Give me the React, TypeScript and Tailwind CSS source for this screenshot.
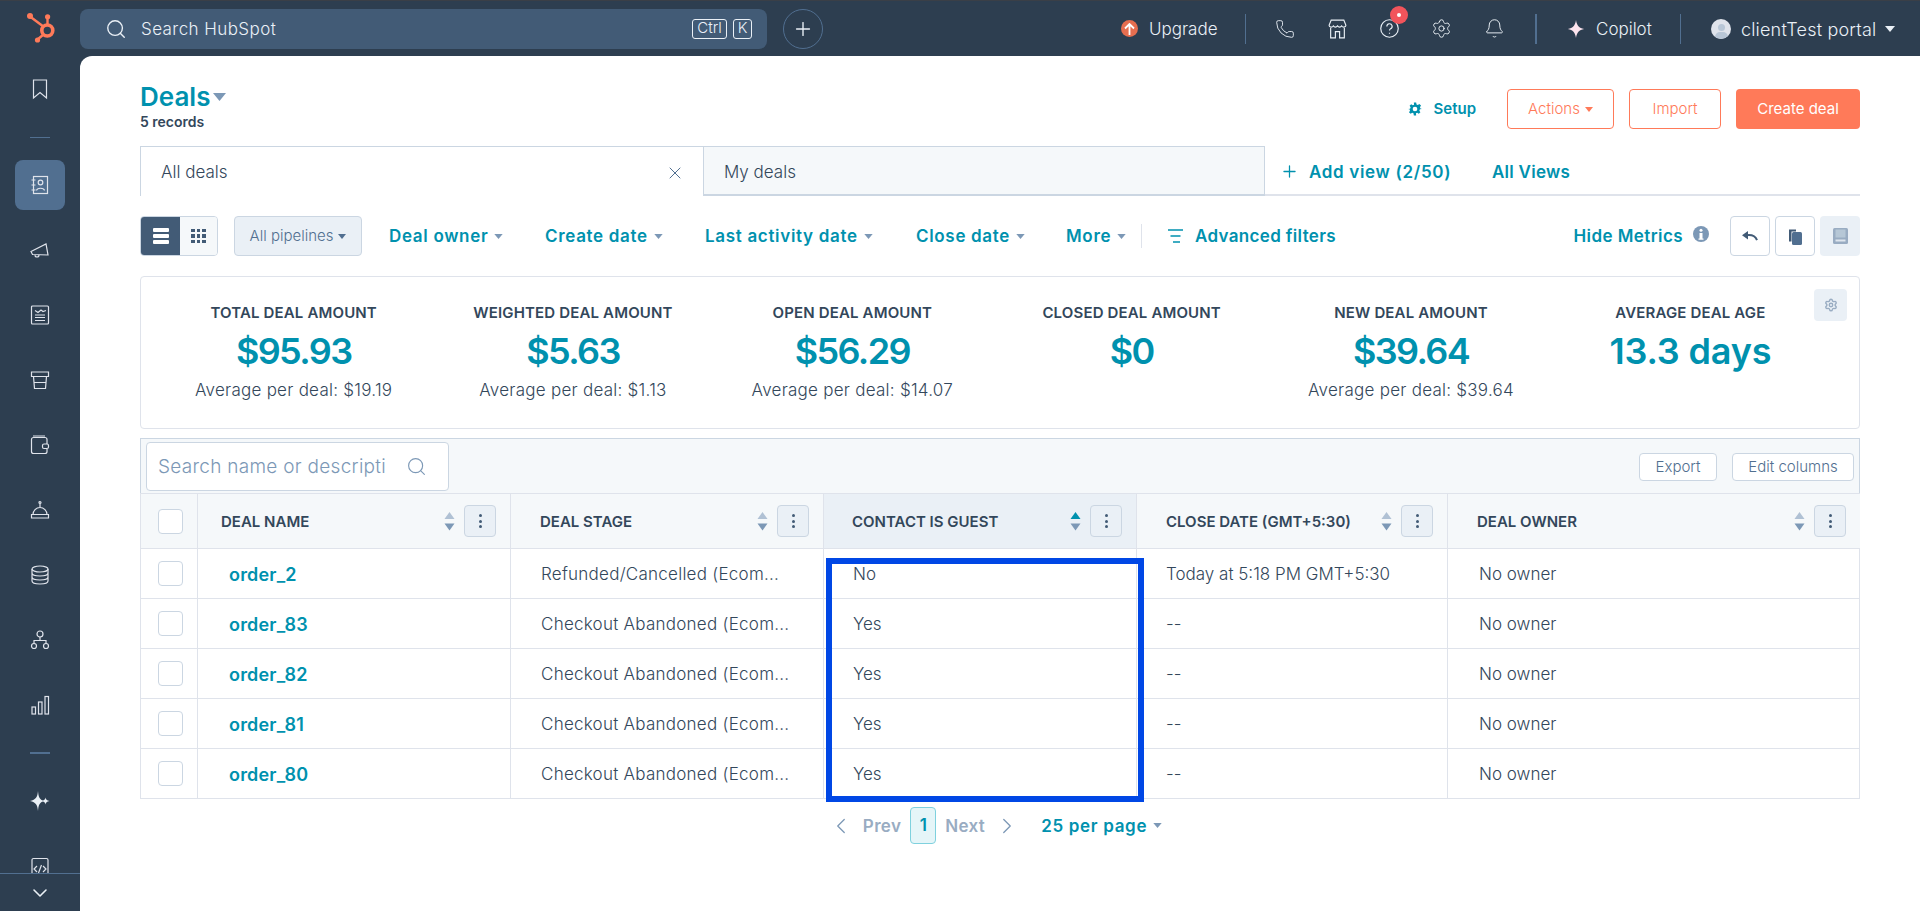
import { ReactNode } from "react";
import { Search, Plus, X, ChevronDown, ChevronLeft, ChevronRight, Phone, Settings, Bell } from "lucide-react";

const filters = [
  { label: "Deal owner", width: "w-[156px]" },
  { label: "Create date", width: "w-[160px]" },
  { label: "Last activity date", width: "w-[211px]" },
  { label: "Close date", width: "w-[150px]" },
  { label: "More", width: "w-[75px]" },
];

const stats = [
  { label: "TOTAL DEAL AMOUNT", value: "$95.93", sub: "Average per deal: $19.19", fit: "tracking-[-0.045em]" },
  { label: "WEIGHTED DEAL AMOUNT", value: "$5.63", sub: "Average per deal: $1.13", fit: "tracking-[-0.045em]" },
  { label: "OPEN DEAL AMOUNT", value: "$56.29", sub: "Average per deal: $14.07", fit: "tracking-[-0.045em]" },
  { label: "CLOSED DEAL AMOUNT", value: "$0", sub: "", fit: "tracking-[-0.045em]" },
  { label: "NEW DEAL AMOUNT", value: "$39.64", sub: "Average per deal: $39.64", fit: "tracking-[-0.045em]" },
  { label: "AVERAGE DEAL AGE", value: "13.3 days", sub: "", fit: "tracking-[-0.005em]" },
];

const rows = [
  { name: "order_2", stage: "Refunded/Cancelled (Ecom...", guest: "No", close: "Today at 5:18 PM GMT+5:30" },
  { name: "order_83", stage: "Checkout Abandoned (Ecom...", guest: "Yes", close: "--" },
  { name: "order_82", stage: "Checkout Abandoned (Ecom...", guest: "Yes", close: "--" },
  { name: "order_81", stage: "Checkout Abandoned (Ecom...", guest: "Yes", close: "--" },
  { name: "order_80", stage: "Checkout Abandoned (Ecom...", guest: "Yes", close: "--" },
];

const gridCols = "grid grid-cols-[57px_313px_313px_313px_311px_413px]";
const linkText = "text-[17px] tracking-[0.04em] font-semibold text-[#0091ae] whitespace-nowrap";

function Caret({ className = "text-[#7c98b6]" }: { className?: string }) {
  return (
    <svg width="10" height="6" viewBox="0 0 10 6" className={`shrink-0 ${className}`}>
      <path d="M0 0h10L5 6z" fill="currentColor" />
    </svg>
  );
}

function SideIcon({ children }: { children: ReactNode }) {
  return (
    <svg width="22" height="22" viewBox="0 0 22 22" fill="none" stroke="currentColor" strokeWidth="1.2" className="text-[#dfe3eb]">
      {children}
    </svg>
  );
}

function SideSlot({ children, active }: { children: ReactNode; active?: boolean }) {
  return (
    <div className="h-[65px] shrink-0 flex items-center justify-center">
      <div className={`w-[50px] h-[50px] rounded-lg flex items-center justify-center ${active ? "bg-[#516f90]" : ""}`}>{children}</div>
    </div>
  );
}

function Sparkle({ color, size }: { color: string; size: number }) {
  return (
    <svg width={size} height={size} viewBox="0 0 20 20" className={color}>
      <path d="M10 0c.8 6 3.500 9 9 10-5.500 1-8.200 4-9 10-.8-6-3.500-9-9-10 5.500-1 8.200-4 9-10z" fill="currentColor" />
    </svg>
  );
}

function SortArrows({ active }: { active?: boolean }) {
  return (
    <svg width="11" height="19" viewBox="0 0 11 19" className="shrink-0">
      <path d="M5.500 0l5 7H.5z" fill={active ? "#0091ae" : "#b0c1d4"} />
      <path d="M5.500 18.500l-5-7h10z" fill="#7c98b6" />
    </svg>
  );
}

function MenuButton() {
  return (
    <button className="ml-[9px] w-[32px] h-[32px] rounded border border-[#cbd6e2] bg-[#eaf0f6] flex flex-col items-center justify-center gap-[2.500px]">
      <span className="w-[3px] h-[3px] rounded-full bg-[#425b76]" />
      <span className="w-[3px] h-[3px] rounded-full bg-[#425b76]" />
      <span className="w-[3px] h-[3px] rounded-full bg-[#425b76]" />
    </button>
  );
}

function HeaderCell({ label, active }: { label: string; active?: boolean }) {
  return (
    <div className={`flex items-center border-l border-[#dfe3eb] pr-[14px] ${active ? "bg-[#eaf0f6] pl-[28px]" : "pl-[29px]"}`}>
      <span className="pt-[2px] text-[15px] font-semibold text-[#33475b] whitespace-nowrap mr-auto">{label}</span>
      <SortArrows active={active} />
      <MenuButton />
    </div>
  );
}

export default function App() {
  return (
    <div className="w-[1920px] h-[911px] overflow-hidden bg-[#2d3e50] font-['Inter',sans-serif] font-light text-[#33475b] flex flex-col">
      <header className="h-[56px] shrink-0 flex items-center text-[#eaf0f6] border-t border-[#3a3f47]">
        <div className="w-[80px] shrink-0 pl-[26px]">
          <svg width="30" height="32" viewBox="0 0 30 32" fill="none" stroke="#ff7a59" className="mt-[-1px]">
            <circle cx="21.300" cy="18.500" r="5.500" strokeWidth="3.600" />
            <path d="M21.500 5v8M4 4.500l14 10.500M11.500 27.500l6-5" strokeWidth="2.400" />
            <circle cx="21.600" cy="4.800" r="2.600" fill="#ff7a59" stroke="none" />
            <circle cx="4" cy="4" r="3" fill="#ff7a59" stroke="none" />
            <circle cx="11.500" cy="28" r="2.600" fill="#ff7a59" stroke="none" />
          </svg>
        </div>
        <div className="w-[687px] h-[40px] rounded-lg bg-[#425b76] flex items-center pl-[25px] pr-[15px]">
          <Search size={22} strokeWidth={1.5} />
          <span className="ml-[14px] pt-[2px] text-[17px] tracking-[0.025em] mr-auto">Search HubSpot</span>
          <span className="h-[20px] w-[35px] border border-[#eaf0f6] rounded-[3px] text-[15px] flex items-center justify-center">Ctrl</span>
          <span className="ml-[6px] h-[20px] w-[19px] border border-[#eaf0f6] rounded-[3px] text-[15px] flex items-center justify-center">K</span>
        </div>
        <button className="ml-[16px] w-[40px] h-[40px] rounded-full border border-[#516f90] flex items-center justify-center">
          <Plus size={22} strokeWidth={1.5} />
        </button>
        <div className="ml-auto mr-[25px] flex items-center">
          <span className="w-[17px] h-[17px] rounded-full bg-[#e66e50] flex items-center justify-center">
            <svg width="11" height="12" viewBox="0 0 11 12" fill="none" stroke="#fff" strokeWidth="1.800">
              <path d="M5.500 12V1.500M1 5.500l4.500-4.500 4.500 4.500" />
            </svg>
          </span>
          <span className="ml-[11px] pt-[2px] w-[96px] text-[17px]">Upgrade</span>
          <span className="w-px h-[30px] bg-[#516f90]" />
          <div className="w-[52px] ml-[13px] flex justify-center">
            <Phone size={20} strokeWidth={1.1} />
          </div>
          <div className="w-[52px] flex justify-center">
            <svg width="19" height="20" viewBox="0 0 18 19" fill="none" stroke="currentColor" strokeWidth="1.100">
              <path d="M3 1h12l2 5c0 2-3 2.200-4 .6C12 8 10 8 9 6.600 8 8 6 8 5 6.600 4 8.200 1 8 1 6z" />
              <path d="M2.500 8.500V18h4.500v-6h4v6h4.500V8.500" />
            </svg>
          </div>
          <div className="w-[52px] flex justify-center relative">
            <svg width="19" height="19" viewBox="0 0 18 18" fill="none" stroke="currentColor" strokeWidth="1.100">
              <circle cx="9" cy="9" r="8.300" />
              <path d="M6.500 7a2.500 2.500 0 1 1 3.500 2.300c-.7.4-1 .8-1 1.700M9 13v1" />
            </svg>
            <span className="absolute left-[27px] top-[-13px] w-[18px] h-[18px] rounded-full bg-[#f2545b] flex items-center justify-center">
              <span className="w-[4px] h-[4px] rounded-full bg-white" />
            </span>
          </div>
          <div className="w-[53px] flex justify-center">
            <Settings size={21} strokeWidth={1.1} />
          </div>
          <div className="w-[52px] flex justify-center">
            <Bell size={21} strokeWidth={1.1} />
          </div>
          <span className="ml-[15px] w-[2px] h-[30px] bg-[#516f90]" />
          <div className="ml-[30px]">
            <Sparkle color="text-[#fde4ee]" size={18} />
          </div>
          <span className="ml-[11px] pt-[2px] w-[84px] text-[17px]">Copilot</span>
          <span className="w-px h-[30px] bg-[#516f90]" />
          <span className="ml-[30px] w-[20px] h-[20px] rounded-full bg-[#dfe3eb] overflow-hidden relative">
            <span className="absolute left-[6.500px] top-[5px] w-[7px] h-[7px] rounded-full bg-[#b8c6d6]" />
            <span className="absolute left-[3.500px] top-[13px] w-[13px] h-[10px] rounded-full bg-[#b8c6d6]" />
          </span>
          <span className="ml-[10px] pt-[2px] w-[144px] text-[18px] tracking-[0.01em] whitespace-nowrap">clientTest portal</span>
          <Caret className="text-[#eaf0f6]" />
        </div>
      </header>

      <div className="flex flex-1 min-h-0">
        <aside className="w-[80px] shrink-0 flex flex-col text-[#dfe3eb] overflow-hidden">
          <div className="flex-1 min-h-0 overflow-hidden flex flex-col items-center">
            <div className="h-[66px] w-full shrink-0 flex items-center justify-center">
              <SideIcon><path d="M4.500 2h13v18L11 14.500 4.500 20z" /></SideIcon>
            </div>
            <div className="h-[30px] w-full shrink-0 flex items-center justify-center">
              <span className="w-[20px] h-px bg-[#516f90]" />
            </div>
            <div className="w-full">
              <SideSlot active>
                <SideIcon>
                  <rect x="4.500" y="2.500" width="14" height="17" />
                  <circle cx="11.500" cy="8.500" r="2.300" />
                  <path d="M7.500 16.500c.5-3 7.500-3 8 0M2.500 6h4M2.500 11h4M2.500 16h4" />
                </SideIcon>
              </SideSlot>
              <SideSlot>
                <SideIcon>
                  <path d="M2 12.500L17 5l2 11-15.500-.5zM6 16a2 2 0 0 0 4 0" />
                </SideIcon>
              </SideSlot>
              <SideSlot>
                <SideIcon>
                  <rect x="2.500" y="2" width="17" height="18" rx="1" />
                  <path d="M6 6.500l3 2 3-2.500 2 1.500 3-1M6 11h10M6 13.500h10M6 16.500h10" />
                </SideIcon>
              </SideSlot>
              <SideSlot>
                <SideIcon>
                  <path d="M2.500 3h17v4.500h-17zM4.500 7.500l1 12h11l1-12M5 13.500h12" />
                </SideIcon>
              </SideSlot>
              <SideSlot>
                <SideIcon>
                  <path d="M18 10V5.500a2 2 0 0 0-2-2H4.500a2 2 0 0 0-2 2v12a2 2 0 0 0 2 2H16a2 2 0 0 0 2-2v-2.500M4 2h12" />
                  <rect x="13.500" y="10" width="6" height="4.500" rx="1.500" />
                </SideIcon>
              </SideSlot>
              <SideSlot>
                <SideIcon>
                  <path d="M4 15.500a7 7 0 0 1 14 0zM2.500 15.500h17v3.500h-17zM11 8.500V5" />
                  <circle cx="11" cy="3.500" r="1" />
                </SideIcon>
              </SideSlot>
              <SideSlot>
                <SideIcon>
                  <ellipse cx="11" cy="5" rx="8" ry="3" />
                  <path d="M3 5v12c0 4 16 4 16 0V5M3 9c0 4 16 4 16 0M3 13c0 4 16 4 16 0" />
                </SideIcon>
              </SideSlot>
              <SideSlot>
                <SideIcon>
                  <circle cx="11" cy="5" r="3" />
                  <circle cx="5" cy="17" r="2.500" />
                  <circle cx="17" cy="17" r="2.500" />
                  <path d="M11 8v3.500M5 14.500v-3h12v3" />
                </SideIcon>
              </SideSlot>
              <SideSlot>
                <SideIcon>
                  <rect x="3" y="13" width="3.500" height="7" />
                  <rect x="9.500" y="8" width="3.500" height="12" />
                  <rect x="16" y="2.500" width="3.500" height="17.500" />
                </SideIcon>
              </SideSlot>
            </div>
            <div className="h-[31px] w-full shrink-0 flex items-center justify-center">
              <span className="w-[20px] h-[2px] bg-[#516f90]" />
            </div>
            <div className="h-[65px] w-full shrink-0 flex items-center justify-center">
              <svg width="20" height="20" viewBox="0 0 20 20" className="text-[#eaf0f6]">
                <path d="M8 0c.5 6 1.500 8.500 6 10-4.500 1.500-5.500 4-6 10-.5-6-2-8.500-8-10 6-1.500 7.500-4 8-10z" fill="currentColor" />
                <path d="M15.500 6.500c.3 2 1.200 3 4 3.500-2.800.5-3.700 1.500-4 3.500-.3-2-1.200-3-4-3.500 2.800-.5 3.700-1.500 4-3.500z" fill="currentColor" />
              </svg>
            </div>
            <div className="h-[40px] w-full shrink-0 overflow-hidden flex items-start justify-center pt-[24px]">
              <SideIcon>
                <path d="M3 22V3a1.500 1.500 0 0 1 1.500-1.500h13A1.500 1.500 0 0 1 19 3v19" />
                <path d="M8 9l-3 3 3 3M14 9l3 3-3 3M12.500 8l-3 8" />
              </SideIcon>
            </div>
          </div>
          <div className="h-[38px] shrink-0 border-t border-[#516f90] flex items-center justify-center">
            <ChevronDown size={24} strokeWidth={1.6} className="text-[#eaf0f6]" />
          </div>
        </aside>

        <main className="flex-1 bg-white rounded-tl-xl px-[60px] min-w-0">
          <div className="h-[90px] flex items-start justify-between">
            <div className="pt-[23px]">
              <div className="flex items-center">
                <h1 className="text-[26px] leading-[36px] font-semibold text-[#0091ae]">Deals</h1>
                <Caret className="text-[#7c98b6] ml-[3px] w-[13px] h-[8px]" />
              </div>
              <div className="text-sm font-semibold leading-[18px] mt-[-2px]">5 records</div>
            </div>
            <div className="pt-[33px] flex items-center">
              <svg width="14" height="14" viewBox="0 0 24 24" className="text-[#0091ae]">
                <path fill="currentColor" d="M10 1h4l.6 3.200 2.200.9 2.700-1.800 2.800 2.800-1.800 2.700.9 2.200L24 12l-3.600.6-.9 2.200 1.800 2.700-2.800 2.800-2.700-1.800-2.200.9L14 23h-4l-.6-3.600-2.200-.9-2.700 1.800-2.800-2.800 1.800-2.700-.9-2.200L0 12l3.600-.6.9-2.200-1.800-2.700 2.800-2.800 2.700 1.800 2.200-.9zM12 8a4 4 0 1 0 0 8 4 4 0 0 0 0-8z" />
              </svg>
              <span className="ml-[12px] text-[15px] font-semibold text-[#0091ae]">Setup</span>
              <button className="ml-[31px] w-[107px] h-[40px] rounded border border-[#ff7a59] text-[15px] text-[#ff7a59] flex items-center justify-center gap-[5px]">
                Actions <Caret className="text-[#ff7a59] w-[8px] h-[5px]" />
              </button>
              <button className="ml-[15px] w-[92px] h-[40px] rounded border border-[#ff7a59] text-[15px] text-[#ff7a59]">Import</button>
              <button className="ml-[15px] w-[124px] h-[40px] rounded bg-[#ff7a59] text-[15px] font-normal text-white">Create deal</button>
            </div>
          </div>

          <div className="h-[50px] flex border-b-2 border-[#dfe3eb]">
            <div className="w-[563px] h-[50px] border-l border-t border-[#cbd6e2] bg-white flex items-center pl-[20px] pr-[20px]">
              <span className="pt-[3px] text-[17px] mr-auto">All deals</span>
              <X size={20} strokeWidth={1.2} className="mt-[2px] mr-[-2px] text-[#516f90]" />
            </div>
            <div className="w-[562px] h-[50px] border-x border-t border-b-2 border-[#cbd6e2] bg-[#f5f8fa] flex items-center pl-[20px]">
              <span className="pt-[4px] text-[17px]">My deals</span>
            </div>
            <div className="flex items-center h-[50px] pl-[15px]">
              <Plus size={19} strokeWidth={1.6} className="text-[#0091ae]" />
              <span className={`ml-[10px] pt-[3px] w-[183px] ${linkText}`}>Add view (2/50)</span>
              <span className="pt-[3px] text-[17px] tracking-[0.015em] font-semibold text-[#0091ae]">All Views</span>
            </div>
          </div>

          <div className="h-[40px] mt-[20px] flex items-center">
            <div className="flex h-[40px] w-[78px] rounded border border-[#cbd6e2] overflow-hidden">
              <span className="w-[39px] bg-[#425b76] flex flex-col items-center justify-center gap-[2px]">
                <span className="w-[16px] h-[4px] rounded-[1px] bg-white" />
                <span className="w-[16px] h-[4px] rounded-[1px] bg-white" />
                <span className="w-[16px] h-[4px] rounded-[1px] bg-white" />
              </span>
              <span className="flex-1 bg-[#f5f8fa] flex items-center justify-center">
                <span className="grid grid-cols-3 gap-[2px]">
                  {[0, 1, 2, 3, 4, 5, 6, 7, 8].map((n) => (
                    <span key={n} className="w-[3.500px] h-[3.500px] bg-[#425b76]" />
                  ))}
                </span>
              </span>
            </div>
            <button className="ml-[16px] w-[128px] h-[40px] rounded border border-[#cbd6e2] bg-[#eaf0f6] text-[15px] text-[#516f90] flex items-center justify-center gap-[5px]">
              All pipelines <Caret className="text-[#516f90] w-[8px] h-[5px]" />
            </button>
            <div className="ml-[27px] flex items-center">
              {filters.map((f) => (
                <div key={f.label} className={`${f.width} flex items-center gap-[6px]`}>
                  <span className={`pt-[1px] ${linkText}`}>{f.label}</span>
                  <Caret className="text-[#7c98b6] w-[9px] h-[5px]" />
                </div>
              ))}
            </div>
            <span className="w-px h-[24px] bg-[#dfe3eb]" />
            <svg width="15" height="14" viewBox="0 0 15 14" fill="none" stroke="#0091ae" strokeWidth="1.500" className="ml-[26px]">
              <path d="M0 1h15M2.500 7h10M5 13h7" />
            </svg>
            <span className="ml-[12px] pt-[1px] text-[17px] tracking-[0.02em] font-semibold text-[#0091ae] whitespace-nowrap">Advanced filters</span>
            <span className="ml-auto pt-[2px] text-[17px] tracking-[0.025em] font-semibold text-[#0091ae] whitespace-nowrap">Hide Metrics</span>
            <svg width="16" height="16" viewBox="0 0 16 16" className="ml-[10px] mb-[5px]">
              <circle cx="8" cy="8" r="8" fill="#7c98b6" />
              <circle cx="8" cy="4.300" r="1.500" fill="#fff" />
              <path d="M6.500 7h3v5.500h1v1.200h-5v-1.200h1z" fill="#fff" />
            </svg>
            <button className="ml-[21px] w-[40px] h-[40px] rounded border border-[#cbd6e2] flex items-center justify-center">
              <svg width="16" height="10" viewBox="0 0 16 10" fill="none">
                <path d="M6 0v8.500L0 4.200z" fill="#425b76" />
                <path d="M5 4.200c5-.5 8.500 1 10 5" stroke="#425b76" strokeWidth="2" />
              </svg>
            </button>
            <button className="ml-[5px] w-[40px] h-[40px] rounded border border-[#cbd6e2] flex items-center justify-center">
              <svg width="14" height="17" viewBox="0 0 14 17">
                <path d="M1 1.500h7v2H3.500v10H1z" fill="#425b76" />
                <rect x="4" y="4" width="10" height="13" rx="1.500" fill="#516f90" />
              </svg>
            </button>
            <button className="ml-[5px] w-[40px] h-[40px] rounded bg-[#eaf0f6] flex items-center justify-center">
              <svg width="15" height="16" viewBox="0 0 15 16">
                <rect width="15" height="16" rx="1.500" fill="#99acc2" />
                <rect x="2.500" y="1.500" width="10" height="8" fill="#b6c7d6" />
                <rect x="2.500" y="11.500" width="10" height="2" fill="#dfe6ee" />
              </svg>
            </button>
          </div>

          <section className="relative h-[153px] mt-[20px] rounded border border-[#dfe3eb] pl-[13px] pr-[29px] pt-[27px]">
            <div className="grid grid-cols-6">
              {stats.map((s) => (
                <div key={s.label} className="flex flex-col items-center">
                  <span className="text-[15px] tracking-[0.01em] leading-[18px] font-semibold whitespace-nowrap">{s.label}</span>
                  <span className={`mt-[7px] text-[36px] leading-[44px] font-semibold text-[#0091ae] whitespace-nowrap ${s.fit}`}>{s.value}</span>
                  <span className="mt-[5px] text-[17px] tracking-[0.015em] leading-[24px] whitespace-nowrap">{s.sub}</span>
                </div>
              ))}
            </div>
            <div className="absolute right-[12px] top-[12px] w-[33px] h-[32px] rounded bg-[#eaf0f6] flex items-center justify-center">
              <Settings size={14} strokeWidth={2.4} className="text-[#99acc2]" />
            </div>
          </section>

          <section className="relative mt-[9px] border border-[#cbd6e2] border-b-0">
            <div className="h-[54px] bg-[#f5f8fa] flex items-center pl-[5px] pr-[5px]">
              <div className="w-[303px] h-[49px] rounded border border-[#cbd6e2] bg-white flex items-center pl-[11px]">
                <span className="w-[237px] pt-[2px] whitespace-nowrap text-[19px] tracking-[0.015em] text-[#7c98b6]">Search name or descripti</span>
                <Search size={21} strokeWidth={1.3} className="ml-[11px] text-[#7c98b6]" />
              </div>
              <button className="ml-auto mt-[2px] pt-[1px] w-[78px] h-[28px] rounded border border-[#cbd6e2] bg-white text-[15px] text-[#516f90]">Export</button>
              <button className="ml-[15px] mt-[2px] pt-[1px] w-[122px] h-[28px] rounded border border-[#cbd6e2] bg-white text-[15px] text-[#516f90]">Edit columns</button>
            </div>
            <div className={`${gridCols} -mx-px h-[56px] bg-[#f5f8fa] border-y border-[#dfe3eb]`}>
              <div className="flex items-center pl-[17px] border-l border-[#dfe3eb]">
                <span className="w-[25px] h-[25px] rounded bg-white border border-[#cbd6e2]" />
              </div>
              <div className="flex items-center border-l border-[#dfe3eb] pl-[23px] pr-[14px]">
                <span className="pt-[2px] text-[15px] font-semibold whitespace-nowrap mr-auto">DEAL NAME</span>
                <SortArrows />
                <MenuButton />
              </div>
              <HeaderCell label="DEAL STAGE" />
              <HeaderCell label="CONTACT IS GUEST" active />
              <HeaderCell label="CLOSE DATE (GMT+5:30)" />
              <HeaderCell label="DEAL OWNER" />
            </div>
            {rows.map((r) => (
              <div key={r.name} className={`${gridCols} -mx-px h-[50px] border-b border-[#dfe3eb]`}>
                <div className="flex items-center pl-[17px] border-l border-[#dfe3eb]">
                  <span className="w-[25px] h-[25px] rounded border border-[#cbd6e2]" />
                </div>
                <div className="flex items-center border-l border-[#dfe3eb] pl-[31px] pt-[2px] text-[18px] tracking-[0.01em] font-semibold text-[#0091ae]">{r.name}</div>
                <div className="flex items-center border-l border-[#dfe3eb] pl-[30px] pt-[2px] text-[17px] tracking-[0.015em] whitespace-nowrap">{r.stage}</div>
                <div className="flex items-center border-l border-[#dfe3eb] pl-[29px] pt-[2px] text-[17px]">{r.guest}</div>
                <div className="flex items-center border-l border-[#dfe3eb] pl-[29px] pt-[2px] text-[17px] whitespace-nowrap">{r.close}</div>
                <div className="flex items-center border-l border-r border-[#dfe3eb] pl-[31px] pt-[2px] text-[17px]">No owner</div>
              </div>
            ))}
            <div className="absolute left-[685px] top-[119px] w-[318px] h-[244px] border-[6px] border-[#0047e5] pointer-events-none" />
          </section>

          <div className="mt-[8px] flex items-center justify-center h-[37px]">
            <div className="flex items-center ml-[-10px]">
              <ChevronLeft size={26} strokeWidth={1.2} className="text-[#7c98b6]" />
              <span className="ml-[9px] pt-[2px] text-[17px] tracking-[0.02em] font-semibold text-[#99acc2]">Prev</span>
              <span className="ml-[9px] pt-[1px] w-[26px] h-[37px] rounded border border-[#7fd1de] bg-[#e5f5f8] flex items-center justify-center text-[17px] font-semibold text-[#0091ae]">1</span>
              <span className="ml-[9px] pt-[2px] text-[17px] tracking-[0.02em] font-semibold text-[#99acc2]">Next</span>
              <ChevronRight size={26} strokeWidth={1.2} className="ml-[9px] text-[#7c98b6]" />
              <span className={`ml-[21px] pt-[2px] ${linkText}`}>25 per page</span>
              <Caret className="ml-[6px] text-[#7c98b6] w-[9px] h-[5px]" />
            </div>
          </div>
        </main>
      </div>
    </div>
  );
}
